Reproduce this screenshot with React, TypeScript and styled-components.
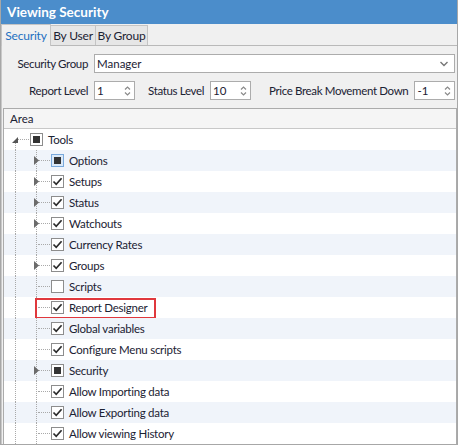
import React from "react";
import styled, { createGlobalStyle, css } from "styled-components";

const Global = createGlobalStyle`
  html, body { margin: 0; padding: 0; background: #ffffff; }
  body { font-family: Lato, "Noto Sans", sans-serif; font-size: 11.5px; color: #1b2233; }
  * { box-sizing: border-box; }
`;

const Window = styled.div`
  width: 458px;
  height: 445px;
  border: 1px solid #a7a7a7;
  border-top: none;
  background: #f0f0f0;
  display: flex;
  flex-direction: column;
  overflow: hidden;
`;

const TitleBar = styled.div`
  height: 24px;
  flex: none;
  background: #4b8dcb;
  color: #ffffff;
  font-weight: 700;
  font-size: 13.5px;
  line-height: 24px;
  padding-left: 7px;
  margin: 0 -1px;
`;

const TabStrip = styled.div`
  height: 22px;
  flex: none;
  display: flex;
  align-items: flex-end;
  border-bottom: 1px solid #b9b9b9;
  background: #f0f0f0;
`;

const Tab = styled.div<{ $active?: boolean; $w: number }>`
  width: ${(p) => p.$w}px;
  height: ${(p) => (p.$active ? "22px" : "20px")};
  text-align: center;
  font-size: 12px;
  letter-spacing: -0.2px;
  line-height: ${(p) => (p.$active ? "21px" : "19px")};
  border: 1px solid #c4c4c4;
  border-bottom: none;
  margin-left: -1px;
  margin-bottom: ${(p) => (p.$active ? "-1px" : "0")};
  background: ${(p) => (p.$active ? "#f0f0f0" : "#e6e6e6")};
  color: ${(p) => (p.$active ? "#1e6fc0" : "#1b2233")};
  white-space: nowrap;
  &:first-child { margin-left: 0; }
`;

const Page = styled.div`
  flex: 1;
  display: flex;
  flex-direction: column;
  padding: 8px 0 0 1px;
  border-left: 1px solid #c9c9c9;
  min-height: 0;
`;

const FormRow = styled.div`
  display: flex;
  align-items: center;
  height: 19px;
  margin-bottom: 8px;
`;

const Label = styled.span<{ $w?: number }>`
  ${(p) => p.$w && css`width: ${p.$w}px;`}
  flex: none;
  text-align: right;
  padding-right: 6px;
  white-space: nowrap;
  letter-spacing: -0.35px;
`;

const Select = styled.div`
  flex: 1;
  height: 19px;
  background: #fff;
  border: 1px solid #acacac;
  display: flex;
  align-items: center;
  padding-left: 2px;
  margin-right: 2px;
  justify-content: space-between;
`;

const Spinner = styled.div`
  width: 41px;
  height: 19px;
  flex: none;
  background: #fff;
  border: 1px solid #acacac;
  display: flex;
  align-items: center;
  justify-content: space-between;
  padding-left: 2px;
  padding-right: 3px;
`;

const Gap = styled.span<{ $w: number }>`
  width: ${(p) => p.$w}px;
  flex: none;
`;

const Grid = styled.div`
  flex: 1;
  background: #fff;
  border: 1px solid #ababab;
  border-bottom: none;
  display: flex;
  flex-direction: column;
  min-height: 0;
  overflow: hidden;
`;

const GridHeader = styled.div`
  height: 20px;
  flex: none;
  background: #f5f5f5;
  border-bottom: 1px solid #c8c8c8;
  line-height: 19px;
  padding-left: 6px;
`;

const Row = styled.div<{ $alt: boolean }>`
  position: relative;
  height: 21px;
  flex: none;
  display: flex;
  align-items: center;
  background: ${(p) => (p.$alt ? "#f0f4fa" : "#ffffff")};
`;

const Cell = styled.div<{ $vline?: boolean; $vtop?: boolean; $hline?: boolean }>`
  position: relative;
  width: 21px;
  height: 21px;
  flex: none;
  display: flex;
  align-items: center;
  justify-content: center;
  ${(p) =>
    p.$vline &&
    css`
      &::before {
        content: "";
        position: absolute;
        left: 11px;
        top: ${p.$vtop ? "11px" : "0"};
        bottom: 0;
        border-left: 1px dotted #a9a9a9;
      }
    `}
  ${(p) =>
    p.$hline &&
    css`
      &::after {
        content: "";
        position: absolute;
        left: 13px;
        right: -4px;
        top: 10px;
        border-top: 1px dotted #a9a9a9;
      }
    `}
`;

const Arrow = styled.svg`
  position: relative;
  z-index: 1;
  margin-left: 1px;
`;

const Box = styled.div<{ $focus?: boolean }>`
  width: 13px;
  height: 13px;
  flex: none;
  margin-left: 5px;
  border: 1px solid ${(p) => (p.$focus ? "#79a9dc" : "#8d8d8d")};
  background: ${(p) => (p.$focus ? "#dbe9f8" : "#fff")};
  display: flex;
  align-items: center;
  justify-content: center;
  position: relative;
  z-index: 1;
`;

const Square = styled.div`
  width: 7px;
  height: 7px;
  background: #333;
`;

const Text = styled.span`
  margin-left: 5px;
  white-space: nowrap;
  letter-spacing: -0.25px;
`;

const Highlight = styled.div`
  position: absolute;
  left: 31px;
  top: 1px;
  width: 121px;
  height: 21px;
  border: 2px solid #e0383d;
  pointer-events: none;
`;

type State = "checked" | "unchecked" | "partial";
type Item = { label: string; level: 1 | 2; expand?: "open" | "closed"; state: State; focus?: boolean; mark?: boolean };

const items: Item[] = [
  { label: "Tools", level: 1, expand: "open", state: "partial" },
  { label: "Options", level: 2, expand: "closed", state: "partial", focus: true },
  { label: "Setups", level: 2, expand: "closed", state: "checked" },
  { label: "Status", level: 2, expand: "closed", state: "checked" },
  { label: "Watchouts", level: 2, expand: "closed", state: "checked" },
  { label: "Currency Rates", level: 2, state: "checked" },
  { label: "Groups", level: 2, expand: "closed", state: "checked" },
  { label: "Scripts", level: 2, state: "unchecked" },
  { label: "Report Designer", level: 2, state: "checked", mark: true },
  { label: "Global variables", level: 2, state: "checked" },
  { label: "Configure Menu scripts", level: 2, state: "checked" },
  { label: "Security", level: 2, expand: "closed", state: "partial" },
  { label: "Allow Importing data", level: 2, state: "checked" },
  { label: "Allow Exporting data", level: 2, state: "checked" },
  { label: "Allow viewing History", level: 2, state: "checked" },
];

const SpinIcon = () => (
  <svg width="7" height="12" viewBox="0 0 7 12">
    <path d="M1 4.5 L3.5 2 L6 4.5" fill="none" stroke="#8a8a8a" strokeWidth="1.2" />
    <path d="M1 7.5 L3.5 10 L6 7.5" fill="none" stroke="#8a8a8a" strokeWidth="1.2" />
  </svg>
);

const ChevronIcon = () => (
  <svg width="10" height="8" viewBox="0 0 10 8" style={{ marginRight: 5 }}>
    <path d="M1.5 2 L5 5.5 L8.5 2" fill="none" stroke="#777" strokeWidth="1.4" />
  </svg>
);

const OpenArrow = () => (
  <Arrow width="6" height="6" viewBox="0 0 6 6">
    <path d="M6 0 L6 6 L0 6 Z" fill="#555" />
  </Arrow>
);

const ClosedArrow = () => (
  <Arrow width="5" height="9" viewBox="0 0 5 9">
    <path d="M0 0 L5 4.5 L0 9 Z" fill="#6b6b6b" />
  </Arrow>
);

const Check = () => (
  <svg width="11" height="11" viewBox="0 0 11 11">
    <path d="M1.5 5.5 L4.2 8.3 L9.6 2.2" fill="none" stroke="#2b2b2b" strokeWidth="1.7" />
  </svg>
);

const CheckBox = ({ state, focus }: { state: State; focus?: boolean }) => (
  <Box $focus={focus}>
    {state === "checked" && <Check />}
    {state === "partial" && <Square />}
  </Box>
);

export default function App() {
  return (
    <>
      <Global />
      <Window>
        <TitleBar>Viewing Security</TitleBar>
        <TabStrip>
          <Tab $active $w={50}>Security</Tab>
          <Tab $w={46}>By User</Tab>
          <Tab $w={53}>By Group</Tab>
        </TabStrip>
        <Page>
          <FormRow>
            <Label $w={91}>Security Group</Label>
            <Select>
              <span>Manager</span>
              <ChevronIcon />
            </Select>
          </FormRow>
          <FormRow>
            <Label $w={91}>Report Level</Label>
            <Spinner>
              <span>1</span>
              <SpinIcon />
            </Spinner>
            <Gap $w={13} />
            <Label>Status Level</Label>
            <Spinner>
              <span>10</span>
              <SpinIcon />
            </Spinner>
            <Gap $w={18} />
            <Label>Price Break Movement Down</Label>
            <Spinner>
              <span>-1</span>
              <SpinIcon />
            </Spinner>
          </FormRow>
          <Grid>
            <GridHeader>Area</GridHeader>
            {items.map((it, i) => (
              <Row key={it.label} $alt={i % 2 === 1}>
                {it.level === 1 ? (
                  <Cell $vline $vtop $hline>
                    <OpenArrow />
                  </Cell>
                ) : (
                  <>
                    <Cell $vline />
                    <Cell $vline $hline>{it.expand === "closed" && <ClosedArrow />}</Cell>
                  </>
                )}
                <CheckBox state={it.state} focus={it.focus} />
                <Text>{it.label}</Text>
                {it.mark && <Highlight />}
              </Row>
            ))}
          </Grid>
        </Page>
      </Window>
    </>
  );
}
